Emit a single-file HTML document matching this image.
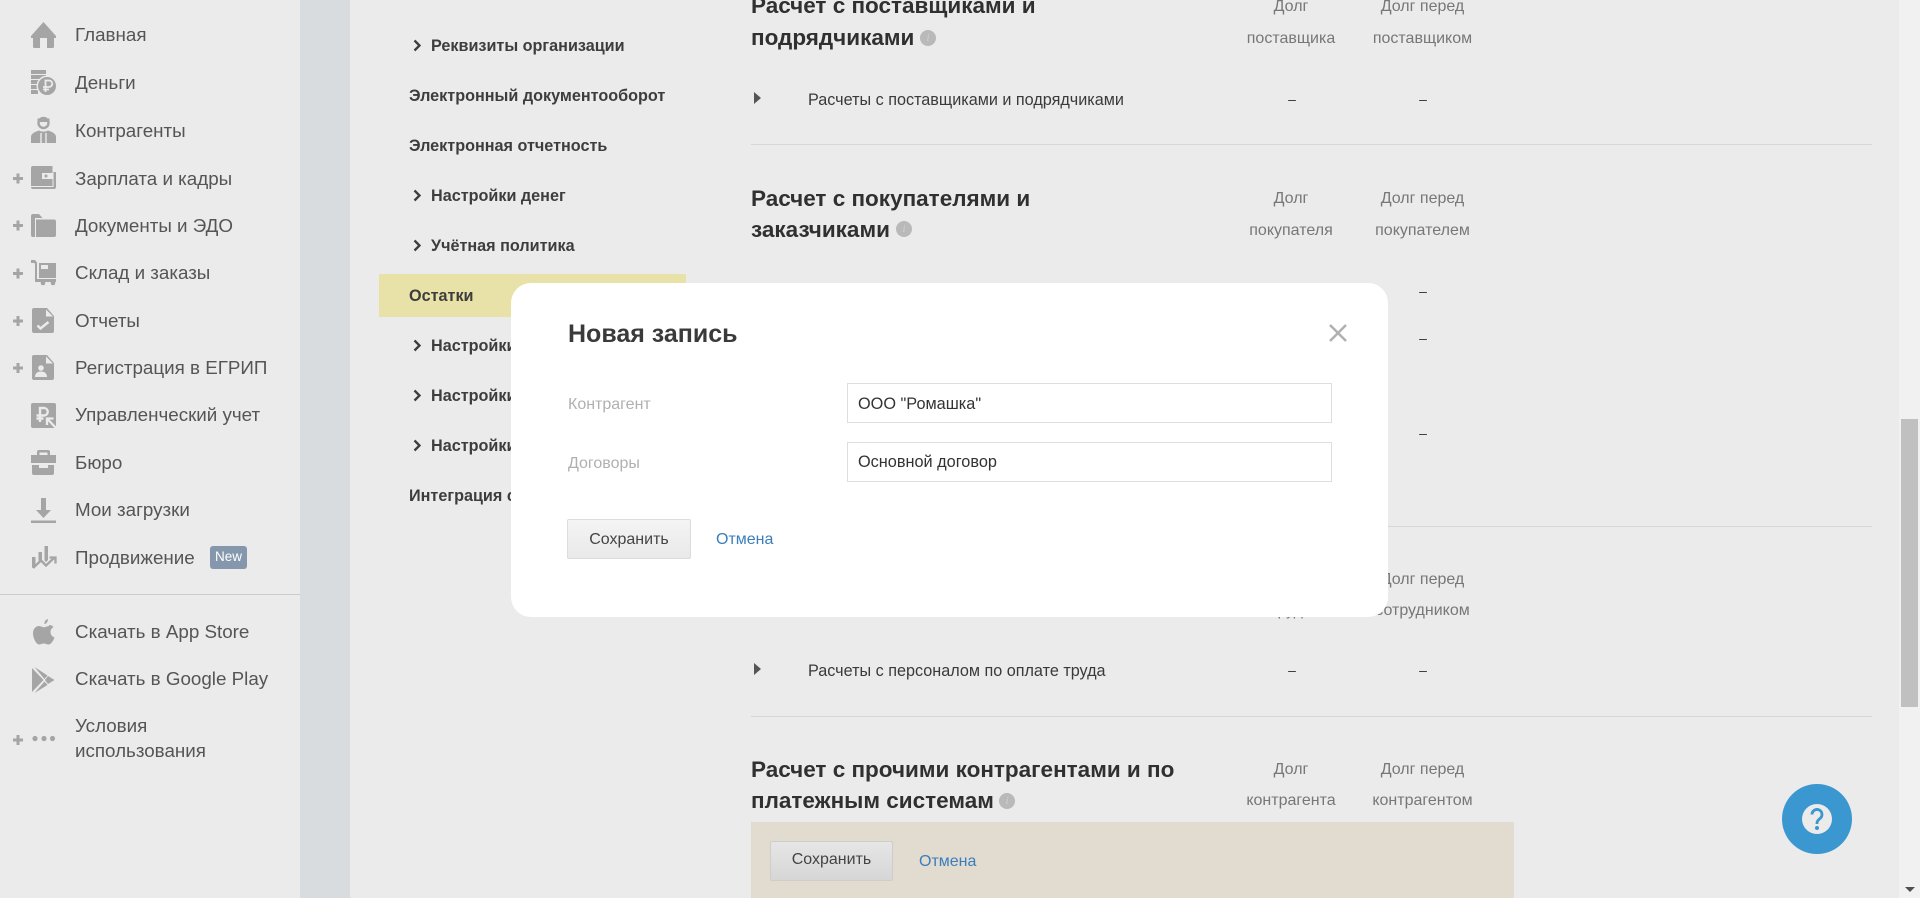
<!DOCTYPE html>
<html lang="ru"><head><meta charset="utf-8"><title>Остатки</title>
<style>
html,body{margin:0;padding:0;width:1920px;height:898px;overflow:hidden;background:#ebebeb;font-family:"Liberation Sans",sans-serif}
.a{position:absolute;white-space:nowrap}
.s{left:75px;font-size:18.800px;line-height:24px;color:#555;margin-top:-11px}
.n{font-size:16.200px;font-weight:bold;line-height:20px;color:#3d3d3d;margin-top:-9px}
.h{left:751px;font-size:22.500px;font-weight:bold;line-height:31px;color:#303030;margin-top:-15px}
.c{font-size:16px;line-height:20px;color:#777;text-align:center;width:160px;margin-top:-9px}
.c1{left:1211px}.c2{left:1342.500px}
.r{font-size:16.200px;line-height:20px;color:#3a3a3a;margin-top:-9px}
.d{font-size:14px;line-height:20px;color:#333;text-align:center;width:40px;margin-top:-9px}
.l{left:751px;width:1121px;height:1px;background:#d6d6d6}
.i{width:16px;height:16px;border-radius:50%;background:#b9b9b9;color:#d0d0d0;font:italic 11px/16px "Liberation Serif",serif;text-align:center}
.t{width:0;height:0;border-left:7px solid #555;border-top:6px solid transparent;border-bottom:6px solid transparent}
.inp{box-sizing:border-box;background:#fff;border:1px solid #dedede;left:847px;width:485px;height:40px;font-size:16.300px;line-height:41px;padding-left:10px;color:#333}
.b{box-sizing:border-box;border:1px solid #dcdcdc;border-radius:2px;text-align:center;font-size:16px;color:#444;line-height:39px}
</style></head><body>
<div class="a" style="left:0;top:0;width:300px;height:898px;background:#ebebeb"></div>
<div class="a" style="left:300px;top:0;width:50px;height:898px;background:#d8dcdf"></div>
<div class="a" style="left:0;top:594px;width:300px;height:1px;background:#cbcbcb"></div>

<svg class="a" style="left:0;top:0" width="300" height="898" viewBox="0 0 300 898" fill="#a5a5a5">
<!-- home -->
<path d="M43.500 22L56 36V38H54V46.500a1.500 1.500 0 0 1-1.500 1.500H47V38H40V48H34.500A1.500 1.500 0 0 1 33 46.500V38H31V36Z"/>
<!-- money -->
<path d="M31 70h15v4H31zM31 75h15v4H31zM31 80h11v4H31zM31 85h7v4H31zM31 90h7v4H31z"/>
<circle cx="47" cy="86" r="10.500" fill="#ebebeb"/><circle cx="47" cy="86" r="9"/>
<path d="M45.500 92V80.500h3.500a2.800 2.800 0 0 1 0 6.500H43M43 89.500h6" fill="none" stroke="#ebebeb" stroke-width="1.800"/>
<!-- person -->
<circle cx="43.500" cy="123" r="5" fill="none" stroke="#a5a5a5" stroke-width="2.400"/>
<path d="M37.500 118.500h12v3.500h-12z"/>
<path d="M31 143v-6c0-3 3-5 8-6.500 3 1.500 6 1.500 9 0 5 1.500 8 3.500 8 6.500v6Z"/>
<path d="M41 133v10M46 133v10" stroke="#ebebeb" stroke-width="1.400" fill="none"/>
<!-- plus signs -->
<path d="M13 177h10v3H13zM16.500 173.500h3v10h-3z"/>
<path d="M13 224h10v3H13zM16.500 220.500h3v10h-3z"/>
<path d="M13 272h10v3H13zM16.500 268.500h3v10h-3z"/>
<path d="M13 319.500h10v3H13zM16.500 316h3v10h-3z"/>
<path d="M13 366.500h10v3H13zM16.500 363h3v10h-3z"/>
<path d="M13 738.500h10v3H13zM16.500 735h3v10h-3z"/>
<!-- wallet -->
<path d="M33 166h19.500v20H31v-18a2 2 0 0 1 2-2Z"/>
<path d="M53.500 172H56v15a2 2 0 0 1-2 2H33a2 2 0 0 1-2-2h22.500Z"/>
<rect x="42" y="173" width="10.500" height="6" fill="#ebebeb"/><circle cx="46" cy="176" r="1.500"/>
<!-- folder -->
<path d="M31 216a2 2 0 0 1 2-2h6l3.500 4V218h-7.500v19H33a2 2 0 0 1-2-2Z"/>
<path d="M36 219.500h18a2 2 0 0 1 2 2V235a2 2 0 0 1-2 2H36Z"/>
<!-- cart -->
<path d="M31 260h4l2 2.500V279h19v3H35v-18.500L34 263H31Z"/>
<path d="M39 263h17v15H39Z"/><path d="M41 265h7v4h-7Z" fill="#ebebeb"/>
<circle cx="43" cy="283" r="2.300"/><circle cx="53" cy="283" r="2.300"/>
<!-- reports -->
<path d="M34 308h13l7 8v15a2 2 0 0 1-2 2H34a2 2 0 0 1-2-2v-21a2 2 0 0 1 2-2Z"/>
<path d="M46 309.500l7 7h-7Z" fill="#ebebeb"/>
<path d="M37.500 325.500l3 3 8-6.500" fill="none" stroke="#ebebeb" stroke-width="2.500"/>
<!-- egrip -->
<path d="M34 355h13l7 8v15a2 2 0 0 1-2 2H34a2 2 0 0 1-2-2v-21a2 2 0 0 1 2-2Z"/>
<path d="M46 356.500l7 7h-7Z" fill="#ebebeb"/>
<circle cx="41" cy="368" r="2.800" fill="#ebebeb"/><path d="M35 377c0-4 3-5.500 6-5.500s6 1.500 6 5.500Z" fill="#ebebeb"/>
<!-- management -->
<path d="M33 403h21a2 2 0 0 1 2 2v23H33a2 2 0 0 1-2-2v-21a2 2 0 0 1 2-2Z"/>
<path d="M40 422v-14h4.500a3.800 3.800 0 0 1 0 7.500H36.500M36.500 418.500h7" fill="none" stroke="#ebebeb" stroke-width="2.400"/>
<path d="M56 428l-9-9.500M47 425v-6.500h6.500" fill="none" stroke="#ebebeb" stroke-width="2.300"/>
<!-- briefcase -->
<path d="M37 456v-4a2 2 0 0 1 2-2h9a2 2 0 0 1 2 2v4h-2.500v-3.500h-8V456Z"/>
<path d="M31 455h25v8H31Z"/>
<path d="M32 465h7v3h9v-3h6v8a2 2 0 0 1-2 2H34a2 2 0 0 1-2-2Z"/>
<!-- downloads -->
<path d="M41 498h5v12h5l-7.500 8L36 510h5Z"/><path d="M31 520.500h25v2.500H31Z"/>
<!-- promotion -->
<path d="M32 557h3.500v8l-3.500 3ZM38.500 552h3.500v9l-1 1-2.500-1.500ZM44.500 546h3.500v14l-2 2-1.500-1.500Z"/>
<path d="M33 568l8-7.500 5 5 8-7.500M49.500 557.500h6v6" fill="none" stroke="#a5a5a5" stroke-width="2.300"/>
<!-- apple -->
<g transform="translate(0,5)"><path d="M45 619c1.500-.500 3-2.500 3-5-2 .500-4 2.500-3.500 5ZM49 621c-2 0-3.500 1.300-5 1.300s-3-1.300-5-1.300c-3 0-6 2.700-6 7.500 0 5 3.500 11 6 11 1.500 0 3-1 4.800-1s3 1 4.700 1c2.500 0 5-4 6-7-2.500-1-4-3-4-5.500 0-2.500 1.500-4 3-5-1.300-1.500-2.800-2-4.500-2Z"/></g>
<!-- play -->
<path d="M32 668v24l11.500-12ZM34.500 667l13 8.500-3 3.500ZM34.500 693l10-11.500 3 3.500ZM48 676l6.500 4-6.500 4-3-4Z"/>
<!-- dots -->
<circle cx="35" cy="738.500" r="2.600"/><circle cx="44" cy="738.500" r="2.600"/><circle cx="52.500" cy="738.500" r="2.600"/>
</svg>

<div class="a s" style="top:34px">Главная</div>
<div class="a s" style="top:82px">Деньги</div>
<div class="a s" style="top:130px">Контрагенты</div>
<div class="a s" style="top:178px">Зарплата и кадры</div>
<div class="a s" style="top:225px">Документы и ЭДО</div>
<div class="a s" style="top:272px">Склад и заказы</div>
<div class="a s" style="top:320px">Отчеты</div>
<div class="a s" style="top:367px">Регистрация в ЕГРИП</div>
<div class="a s" style="top:414px">Управленческий учет</div>
<div class="a s" style="top:462px">Бюро</div>
<div class="a s" style="top:509px">Мои загрузки</div>
<div class="a s" style="top:557px">Продвижение</div>
<div class="a" style="left:210px;top:546px;width:37px;height:23px;background:#8497ad;border-radius:3px;color:#fff;font-size:13.500px;line-height:22px;text-align:center">New</div>
<div class="a s" style="top:631px">Скачать в App Store</div>
<div class="a s" style="top:678px">Скачать в Google Play</div>
<div class="a s" style="top:725px">Условия</div>
<div class="a s" style="top:750px">использования</div>

<!-- settings nav -->
<div class="a" style="left:379px;top:274px;width:307px;height:43px;background:#e8e2a8"></div>
<svg class="a" style="left:0;top:0" width="700" height="898" fill="none" stroke="#3d3d3d" stroke-width="2.300">
<path d="M414.500 40.500l5 5-5 5M414.500 190.500l5 5-5 5M414.500 240.500l5 5-5 5M414.500 340.500l5 5-5 5M414.500 390.500l5 5-5 5M414.500 440.500l5 5-5 5"/>
</svg>
<div class="a n" style="left:431px;top:45px">Реквизиты организации</div>
<div class="a n" style="left:409px;top:95px">Электронный документооборот</div>
<div class="a n" style="left:409px;top:145px">Электронная отчетность</div>
<div class="a n" style="left:431px;top:195px">Настройки денег</div>
<div class="a n" style="left:431px;top:245px">Учётная политика</div>
<div class="a n" style="left:409px;top:295px">Остатки</div>
<div class="a n" style="left:431px;top:345px">Настройки</div>
<div class="a n" style="left:431px;top:395px">Настройки</div>
<div class="a n" style="left:431px;top:445px">Настройки</div>
<div class="a n" style="left:409px;top:495px">Интеграция с</div>

<!-- right column -->
<div class="a h" style="top:5px">Расчет с поставщиками и</div>
<div class="a h" style="top:37px">подрядчиками</div>
<div class="a i" style="left:920px;top:30px">i</div>
<div class="a c c1" style="top:6px">Долг</div><div class="a c c2" style="top:6px">Долг перед</div>
<div class="a c c1" style="top:38px">поставщика</div><div class="a c c2" style="top:38px">поставщиком</div>
<div class="a t" style="left:754px;top:92px"></div>
<div class="a r" style="left:808px;top:99px">Расчеты с поставщиками и подрядчиками</div>
<div class="a d" style="left:1272px;top:98px">–</div><div class="a d" style="left:1403px;top:98px">–</div>
<div class="a l" style="top:144px"></div>

<div class="a h" style="top:198px">Расчет с покупателями и</div>
<div class="a h" style="top:229px">заказчиками</div>
<div class="a i" style="left:896px;top:221px">i</div>
<div class="a c c1" style="top:198px">Долг</div><div class="a c c2" style="top:198px">Долг перед</div>
<div class="a c c1" style="top:230px">покупателя</div><div class="a c c2" style="top:230px">покупателем</div>
<div class="a d" style="left:1403px;top:290px">–</div>
<div class="a d" style="left:1403px;top:337px">–</div>
<div class="a d" style="left:1403px;top:432px">–</div>
<div class="a l" style="top:526px"></div>

<div class="a c c1" style="top:610px">труда</div>
<div class="a c c2" style="top:579px">Долг перед</div>
<div class="a c c2" style="top:610px">сотрудником</div>
<div class="a t" style="left:754px;top:663px"></div>
<div class="a r" style="left:808px;top:670px">Расчеты с персоналом по оплате труда</div>
<div class="a d" style="left:1272px;top:669px">–</div><div class="a d" style="left:1403px;top:669px">–</div>
<div class="a l" style="top:716px"></div>

<div class="a h" style="top:769px">Расчет с прочими контрагентами и по</div>
<div class="a h" style="top:800px">платежным системам</div>
<div class="a i" style="left:999px;top:793px">i</div>
<div class="a c c1" style="top:769px">Долг</div><div class="a c c2" style="top:769px">Долг перед</div>
<div class="a c c1" style="top:800px">контрагента</div><div class="a c c2" style="top:800px">контрагентом</div>
<div class="a" style="left:751px;top:822px;width:763px;height:76px;background:#e2dbcf"></div>
<div class="a b" style="left:770px;top:841px;width:123px;height:40px;background:linear-gradient(#e6e6e6,#d6d6d6);border-color:#cfcdc8;line-height:36px">Сохранить</div>
<div class="a" style="left:919px;top:852px;font-size:16px;line-height:20px;color:#3a7ebc">Отмена</div>

<!-- help -->
<div class="a" style="left:1782px;top:784px;width:70px;height:70px;border-radius:50%;background:#3a97cf"></div>
<div class="a" style="left:1802px;top:804px;width:30px;height:30px;border-radius:50%;background:#ebebeb"></div>
<svg class="a" style="left:1802px;top:804px" width="30" height="30" fill="none" stroke="#3a97cf" stroke-width="2.800">
<path d="M10 10.500a5 5 0 1 1 8 4c-2 1.500-3 2.500-3 4.500v1"/><circle cx="15" cy="24" r="2" fill="#3a97cf" stroke="none"/></svg>

<!-- scrollbar -->
<div class="a" style="left:1899px;top:0;width:21px;height:898px;background:#f1f1f1"></div>
<div class="a" style="left:1901px;top:419px;width:17px;height:288px;background:#c0c0c0"></div>
<div class="a" style="left:1905px;top:887px;width:0;height:0;border-left:5px solid transparent;border-right:5px solid transparent;border-top:5px solid #505050"></div>

<!-- modal -->
<div class="a" style="left:511px;top:283px;width:877px;height:334px;background:#fff;border-radius:20px"></div>
<div class="a" style="left:568px;top:319px;font-size:25px;font-weight:bold;line-height:30px;color:#3a3a3a">Новая запись</div>
<svg class="a" style="left:1329px;top:324px" width="18" height="18" fill="none" stroke="#b0b0b0" stroke-width="2.500"><path d="M1 1l16 16M17 1L1 17"/></svg>
<div class="a" style="left:568px;top:395px;font-size:16px;line-height:20px;color:#b0b0b0">Контрагент</div>
<div class="a" style="left:568px;top:454px;font-size:16px;line-height:20px;color:#b0b0b0">Договоры</div>
<div class="a inp" style="top:383px">ООО "Ромашка"</div>
<div class="a inp" style="top:442px;line-height:39px">Основной договор</div>
<div class="a b" style="left:567px;top:519px;width:124px;height:40px;background:linear-gradient(#f4f4f4,#e9e9e9)">Сохранить</div>
<div class="a" style="left:716px;top:530px;font-size:16px;line-height:20px;color:#3a7ebc">Отмена</div>
</body></html>
